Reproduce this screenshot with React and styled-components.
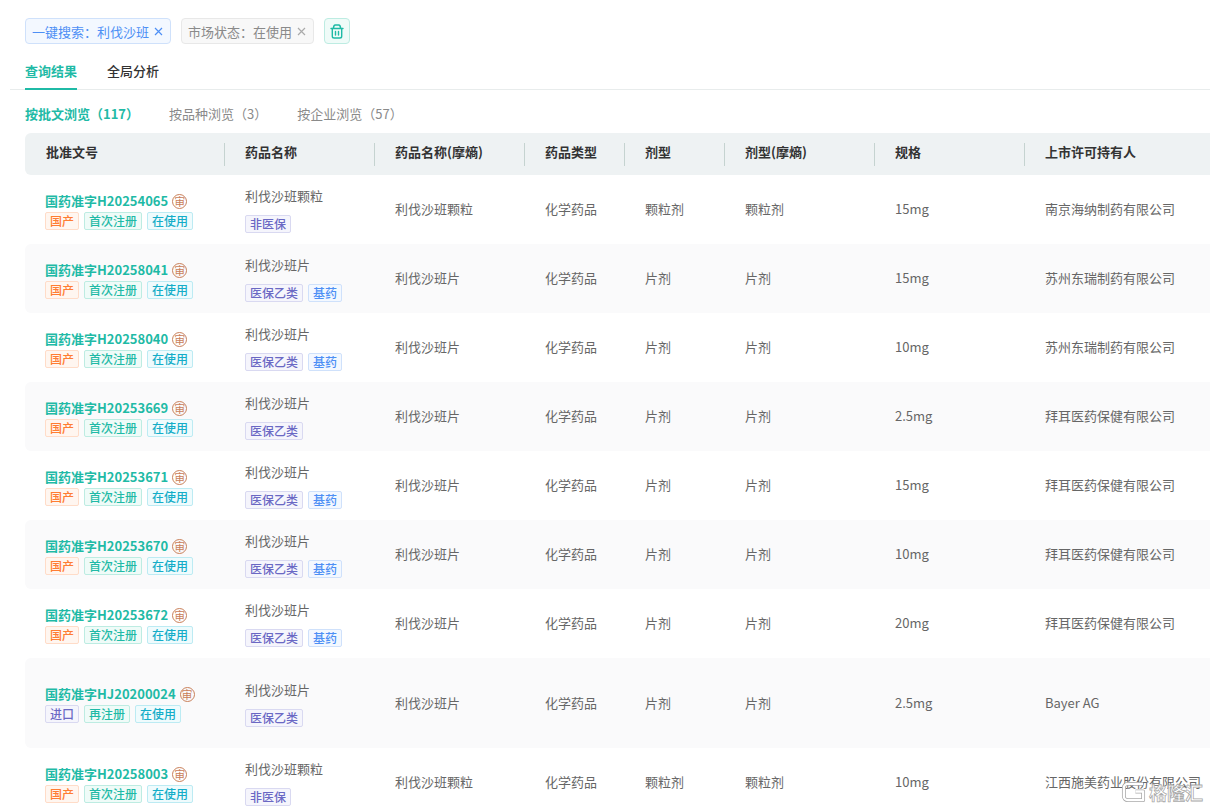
import React from 'react';
import styled, { createGlobalStyle } from 'styled-components';

const GlobalStyle = createGlobalStyle`
  html, body {
    margin: 0;
    padding: 0;
    background: #fff;
    overflow: hidden;
  }
  body {
    font-family: "Noto Sans CJK SC", "Noto Sans", sans-serif;
    font-size: 13px;
    color: #333;
  }
`;

const TONES = {
  orange: { color: '#ff7d32', bg: '#fff6f0', border: '#ffdcc8' },
  green: { color: '#1fbaa6', bg: '#effbf8', border: '#bdece2' },
  cyan: { color: '#14adc8', bg: '#effbfd', border: '#bcebf3' },
  purple: { color: '#6a68c4', bg: '#f5f5fc', border: '#d9d9f1' },
  blue: { color: '#4d8ff5', bg: '#f3f8ff', border: '#cfe1fb' },
};

const Page = styled.div`
  position: relative;
  width: 1210px;
  height: 809px;
  overflow: hidden;
  background: #fff;
`;

const FilterBar = styled.div`
  display: flex;
  align-items: center;
  gap: 10px;
  padding: 18px 0 0 25px;
`;

const FilterChip = styled.div`
  display: flex;
  align-items: center;
  gap: 5px;
  height: 26px;
  box-sizing: border-box;
  padding: 0 7px 0 6px;
  border-radius: 4px;
  font-size: 13px;
  color: ${({ $blue }) => ($blue ? '#4d8ff5' : '#8a8a8a')};
  background: ${({ $blue }) => ($blue ? '#f3f8ff' : '#f8f8f8')};
  border: 1px solid ${({ $blue }) => ($blue ? '#cfe1fb' : '#e8e8e8')};
`;

const ClearButton = styled.button`
  display: flex;
  align-items: center;
  justify-content: center;
  width: 26px;
  height: 26px;
  padding: 0;
  border-radius: 4px;
  background: #effbf8;
  border: 1px solid #bdece2;
  color: #1fbaa6;
`;

const Tabs = styled.div`
  display: flex;
  gap: 30px;
  margin: 12px 0 0 10px;
  padding-left: 15px;
  border-bottom: 1px solid #e8ecec;
`;

const Tab = styled.div`
  height: 34px;
  box-sizing: border-box;
  padding-top: 5px;
  line-height: 20px;
  font-size: 13px;
  font-weight: ${({ $active }) => ($active ? 700 : 500)};
  color: ${({ $active }) => ($active ? '#1fbaa6' : '#333')};
  border-bottom: ${({ $active }) => ($active ? '2px solid #1fbaa6' : 'none')};
  margin-bottom: -1px;
`;

const SubTabs = styled.div`
  display: flex;
  gap: 30px;
  height: 43px;
  padding: 14px 0 0 25px;
  box-sizing: border-box;
  line-height: 20px;
`;

const SubTab = styled.div`
  font-size: 13px;
  font-weight: ${({ $active }) => ($active ? 700 : 400)};
  color: ${({ $active }) => ($active ? '#1fbaa6' : '#8a8a8a')};
`;

const Table = styled.div`
  width: 1300px;
  margin-left: 25px;
`;

const COLUMNS = '200px 150px 150px 100px 100px 150px 150px 300px';

const HeaderRow = styled.div`
  display: grid;
  grid-template-columns: ${COLUMNS};
  align-items: center;
  height: 42px;
  background: #eef2f3;
  border-radius: 6px;
`;

const HeaderCell = styled.div`
  padding-left: ${({ $first }) => ($first ? '21px' : '20px')};
  height: 23px;
  line-height: 18px;
  font-size: 13px;
  font-weight: 700;
  color: #333;
  border-left: ${({ $first }) => ($first ? 'none' : '1px solid #c5d3d0')};
  margin-left: ${({ $first }) => ($first ? '0' : '-1px')};
`;

const Row = styled.div`
  display: grid;
  grid-template-columns: ${COLUMNS};
  align-items: center;
  height: ${({ $tall }) => ($tall ? '90px' : '69px')};
  background: ${({ $odd }) => ($odd ? '#fafafb' : '#fff')};
  border-radius: 6px;
`;

const Cell = styled.div`
  padding: 0 0 1px 20px;
  font-size: 13px;
  line-height: 20px;
  color: #666;
  white-space: nowrap;
`;

const NameCell = styled(Cell)`
  padding-bottom: 0;
`;

const ApprovalCell = styled(Cell)`
  padding: 2px 0 ${({ $tall }) => ($tall ? '1px' : '0')} 20px;
`;

const ApprovalLine = styled.div`
  display: flex;
  align-items: center;
  gap: 4px;
  height: 20px;
  font-weight: 700;
  color: #1fbaa6;
`;

const ReviewMark = styled.span`
  display: inline-flex;
  align-items: center;
  justify-content: center;
  width: 13px;
  height: 13px;
  border: 1px solid #c9805a;
  border-radius: 50%;
  font-size: 11px;
  line-height: 1;
  font-weight: 400;
  color: #c9805a;
`;

const TagRow = styled.div`
  display: flex;
  gap: 5px;
  margin-top: ${({ $loose }) => ($loose ? '9px' : '1px')};
`;

const Tag = styled.span`
  display: inline-flex;
  align-items: center;
  height: 18px;
  box-sizing: border-box;
  padding: 0 4px;
  border-radius: 2px;
  font-size: 12px;
  font-weight: 500;
  line-height: 1;
  color: ${({ $tone }) => TONES[$tone].color};
  background: ${({ $tone }) => TONES[$tone].bg};
  border: 1px solid ${({ $tone }) => TONES[$tone].border};
`;

const Watermark = styled.div`
  position: absolute;
  right: 7px;
  bottom: 5px;
  display: flex;
  align-items: center;
  gap: 3px;
  font-size: 18px;
  line-height: 24px;
  font-weight: 700;
  color: rgba(255, 255, 255, 0.92);
  -webkit-text-stroke: 0.8px rgba(160, 160, 160, 0.9);
`;

const CloseIcon = ({ color }) => (
  <svg width="9" height="9" viewBox="0 0 9 9" fill="none" stroke={color} strokeWidth="1.2">
    <path d="M1 1l7 7M8 1L1 8" />
  </svg>
);

const TrashIcon = () => (
  <svg width="14" height="15" viewBox="0 0 14 15" fill="none" stroke="currentColor" strokeWidth="1.4" strokeLinecap="round">
    <path d="M1 4.500h12M3.500 4.500c0-2 .7-3.500 1.800-3.500h3.400c1.100 0 1.800 1.500 1.800 3.500" />
    <path d="M2.300 4.500v7.700c0 1 .8 1.800 1.800 1.800h5.800c1 0 1.800-.8 1.800-1.800V4.500M5.500 7.500v3.500M8.500 7.500v3.500" />
  </svg>
);

const WatermarkLogo = () => (
  <svg width="25" height="24" viewBox="0 0 26 24" fill="none" strokeLinejoin="round">
    <path d="M23 3.500H7a4 4 0 0 0-4 4v9a4 4 0 0 0 4 4h16v-9h-8" stroke="rgba(160,160,160,.9)" strokeWidth="4" />
    <path d="M23 3.500H7a4 4 0 0 0-4 4v9a4 4 0 0 0 4 4h16v-9h-8" stroke="#fff" strokeWidth="2.400" />
  </svg>
);

const ROWS = [
  { no: '国药准字H20254065', origin: '国产', reg: '首次注册', name: '利伐沙班颗粒', ins: '非医保', form: '颗粒剂', spec: '15mg', holder: '南京海纳制药有限公司' },
  { no: '国药准字H20258041', origin: '国产', reg: '首次注册', name: '利伐沙班片', ins: '医保乙类', base: true, form: '片剂', spec: '15mg', holder: '苏州东瑞制药有限公司' },
  { no: '国药准字H20258040', origin: '国产', reg: '首次注册', name: '利伐沙班片', ins: '医保乙类', base: true, form: '片剂', spec: '10mg', holder: '苏州东瑞制药有限公司' },
  { no: '国药准字H20253669', origin: '国产', reg: '首次注册', name: '利伐沙班片', ins: '医保乙类', form: '片剂', spec: '2.5mg', holder: '拜耳医药保健有限公司' },
  { no: '国药准字H20253671', origin: '国产', reg: '首次注册', name: '利伐沙班片', ins: '医保乙类', base: true, form: '片剂', spec: '15mg', holder: '拜耳医药保健有限公司' },
  { no: '国药准字H20253670', origin: '国产', reg: '首次注册', name: '利伐沙班片', ins: '医保乙类', base: true, form: '片剂', spec: '10mg', holder: '拜耳医药保健有限公司' },
  { no: '国药准字H20253672', origin: '国产', reg: '首次注册', name: '利伐沙班片', ins: '医保乙类', base: true, form: '片剂', spec: '20mg', holder: '拜耳医药保健有限公司' },
  { no: '国药准字HJ20200024', origin: '进口', reg: '再注册', name: '利伐沙班片', ins: '医保乙类', form: '片剂', spec: '2.5mg', holder: 'Bayer AG', tall: true },
  { no: '国药准字H20258003', origin: '国产', reg: '首次注册', name: '利伐沙班颗粒', ins: '非医保', form: '颗粒剂', spec: '10mg', holder: '江西施美药业股份有限公司' },
];

const HEADERS = ['批准文号', '药品名称', '药品名称(摩熵)', '药品类型', '剂型', '剂型(摩熵)', '规格', '上市许可持有人'];

const App = () => (
  <Page>
    <GlobalStyle />
    <FilterBar>
      <FilterChip $blue>一键搜索：利伐沙班 <CloseIcon color="#4d8ff5" /></FilterChip>
      <FilterChip>市场状态：在使用 <CloseIcon color="#aaa" /></FilterChip>
      <ClearButton><TrashIcon /></ClearButton>
    </FilterBar>
    <Tabs>
      <Tab $active>查询结果</Tab>
      <Tab>全局分析</Tab>
    </Tabs>
    <SubTabs>
      <SubTab $active>按批文浏览（117）</SubTab>
      <SubTab>按品种浏览（3）</SubTab>
      <SubTab>按企业浏览（57）</SubTab>
    </SubTabs>
    <Table>
      <HeaderRow>
        {HEADERS.map((h, i) => <HeaderCell key={h} $first={i === 0}>{h}</HeaderCell>)}
      </HeaderRow>
      {ROWS.map((r, i) => (
        <Row key={r.no} $odd={i % 2 === 1} $tall={r.tall}>
          <ApprovalCell $tall={r.tall}>
            <ApprovalLine>{r.no}<ReviewMark>审</ReviewMark></ApprovalLine>
            <TagRow>
              <Tag $tone={r.origin === '国产' ? 'orange' : 'purple'}>{r.origin}</Tag>
              <Tag $tone="green">{r.reg}</Tag>
              <Tag $tone="cyan">在使用</Tag>
            </TagRow>
          </ApprovalCell>
          <NameCell>
            <div>{r.name}</div>
            <TagRow $loose>
              <Tag $tone="purple">{r.ins}</Tag>
              {r.base && <Tag $tone="blue">基药</Tag>}
            </TagRow>
          </NameCell>
          <Cell>{r.name}</Cell>
          <Cell>化学药品</Cell>
          <Cell>{r.form}</Cell>
          <Cell>{r.form}</Cell>
          <Cell>{r.spec}</Cell>
          <Cell>{r.holder}</Cell>
        </Row>
      ))}
    </Table>
    <Watermark>
      <WatermarkLogo />
      格隆汇
    </Watermark>
  </Page>
);

export default App;
